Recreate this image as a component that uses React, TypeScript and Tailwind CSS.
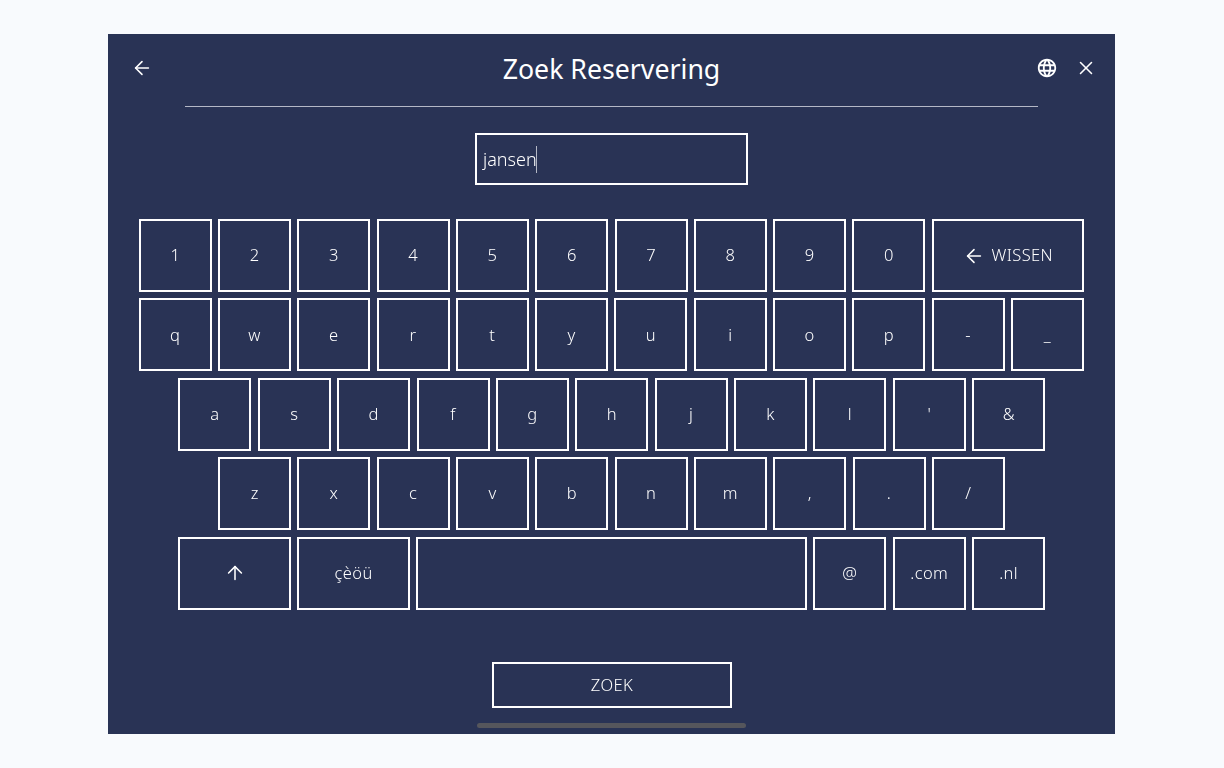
import { ArrowLeft, ArrowUp, X } from 'lucide-react'
import { MdLanguage } from 'react-icons/md'

const digits = ['1', '2', '3', '4', '5', '6', '7', '8', '9', '0']
const qwerty = ['q', 'w', 'e', 'r', 't', 'y', 'u', 'i', 'o', 'p', '-', '_']
const home = ['a', 's', 'd', 'f', 'g', 'h', 'j', 'k', 'l', "'", '&']
const bottom = ['z', 'x', 'c', 'v', 'b', 'n', 'm', ',', '.', '/']

function Key({ children, className = 'w-[73px]' }: { children?: React.ReactNode; className?: string }) {
  return (
    <button className={`h-[73px] shrink-0 border-2 border-white flex items-center justify-center gap-[7px] text-[16.5px] font-light tracking-[0.4px] text-white ${className}`}>
      {children}
    </button>
  )
}

export default function App() {
  return (
    <div className="h-[768px] bg-[#f8fafd] pl-[108px] flex items-center font-['Noto_Sans',sans-serif]">
      <div className="w-[1007px] h-[700px] bg-[#293355] flex flex-col items-center">
        <header className="w-full h-[72px] pb-[4px] px-[18px] grid grid-cols-[1fr_auto_1fr] items-center">
          <ArrowLeft size={22} strokeWidth={1.7} className="ml-[5px] text-white" />
          <h1 className="pt-[2px] text-[26.7px] font-normal text-white m-0">Zoek Reservering</h1>
          <div className="flex items-center justify-end gap-[17px]">
            <MdLanguage size={22} className="text-white" />
            <X size={22} strokeWidth={1.7} className="text-white" />
          </div>
        </header>
        <div className="w-[853px] h-px bg-[#b4b8c6]" />
        <div className="mt-[26px] w-[273px] h-[52px] border-2 border-white flex items-center pl-[6px] text-[18px] font-light text-white will-change-transform">
          jansen<span className="-ml-px w-px h-[27px] bg-[#b4b8c6]" />
        </div>
        <div className="mt-[34px] w-full flex justify-center will-change-transform">
          <div className="pr-[0.4px] flex flex-col items-center gap-[6.4px]">
            <div className="flex gap-[6.3px]">
              {digits.map((k) => (
                <Key key={k}>{k}</Key>
              ))}
              <Key className="w-[152px]">
                <ArrowLeft size={22} strokeWidth={1.7} />
                WISSEN
              </Key>
            </div>
            <div className="flex gap-[6.3px]">
              {qwerty.map((k) => (
                <Key key={k}>{k}</Key>
              ))}
            </div>
            <div className="ml-[1px] flex gap-[6.4px]">
              {home.map((k) => (
                <Key key={k}>{k}</Key>
              ))}
            </div>
            <div className="ml-[0.4px] flex gap-[6.3px]">
              {bottom.map((k) => (
                <Key key={k}>{k}</Key>
              ))}
            </div>
            <div className="ml-[1px] flex gap-[6.4px]">
              <Key className="w-[112.5px]">
                <ArrowUp size={22} strokeWidth={1.7} />
              </Key>
              <Key className="w-[112.5px]">çèöü</Key>
              <Key className="w-[390.7px]" />
              <Key>@</Key>
              <Key>.com</Key>
              <Key>.nl</Key>
            </div>
          </div>
        </div>
        <button className="mt-[52px] w-[240px] h-[46px] border-2 border-white text-[16.5px] font-light tracking-[0.4px] text-white will-change-transform">ZOEK</button>
        <div className="mt-[15px] w-[269px] h-[5px] rounded-full bg-[#55565c]" />
      </div>
    </div>
  )
}
